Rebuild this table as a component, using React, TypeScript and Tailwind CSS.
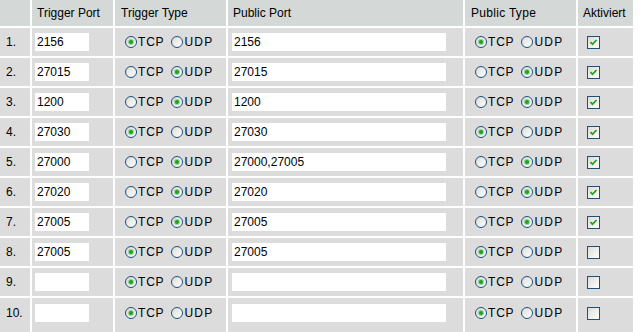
import React from 'react';

type Proto = 'TCP' | 'UDP';

interface Rule {
  triggerPort: string;
  triggerType: Proto;
  publicPort: string;
  publicType: Proto;
  enabled: boolean;
}

const rules: Rule[] = [
  { triggerPort: '2156', triggerType: 'TCP', publicPort: '2156', publicType: 'TCP', enabled: true },
  { triggerPort: '27015', triggerType: 'UDP', publicPort: '27015', publicType: 'UDP', enabled: true },
  { triggerPort: '1200', triggerType: 'UDP', publicPort: '1200', publicType: 'UDP', enabled: true },
  { triggerPort: '27030', triggerType: 'TCP', publicPort: '27030', publicType: 'TCP', enabled: true },
  { triggerPort: '27000', triggerType: 'UDP', publicPort: '27000,27005', publicType: 'UDP', enabled: true },
  { triggerPort: '27020', triggerType: 'UDP', publicPort: '27020', publicType: 'UDP', enabled: true },
  { triggerPort: '27005', triggerType: 'UDP', publicPort: '27005', publicType: 'UDP', enabled: true },
  { triggerPort: '27005', triggerType: 'TCP', publicPort: '27005', publicType: 'TCP', enabled: false },
  { triggerPort: '', triggerType: 'TCP', publicPort: '', publicType: 'TCP', enabled: false },
  { triggerPort: '', triggerType: 'TCP', publicPort: '', publicType: 'TCP', enabled: false },
];

const Radio: React.FC<{ checked: boolean }> = ({ checked }) => (
  <span className="relative inline-flex h-[12px] w-[12px] shrink-0 items-center justify-center rounded-full border border-[#1c5180] bg-gradient-to-br from-[#dcdcd6] to-white">
    {checked && <span className="h-[4px] w-[4px] rounded-full bg-[#21a121] shadow-[0_0_1px_1px_rgba(80,190,80,0.6)]" />}
  </span>
);

const ProtoPicker: React.FC<{ value: Proto }> = ({ value }) => (
  <div className="flex items-center pl-[10px]">
    <Radio checked={value === 'TCP'} />
    <span className="ml-[1px] mr-[7px] tracking-[0.8px]">TCP</span>
    <Radio checked={value === 'UDP'} />
    <span className="ml-[1px] tracking-[1.2px]">UDP</span>
  </div>
);

const Checkbox: React.FC<{ checked: boolean }> = ({ checked }) => (
  <span className="inline-flex h-[13px] w-[13px] items-center justify-center border border-[#1c5180] bg-gradient-to-br from-[#dcdcd7] to-white">
    {checked && (
      <svg width="9" height="9" viewBox="0 0 9 9">
        <path d="M1.5 4.2 L3.5 6.3 L7.5 2" fill="none" stroke="#21a121" strokeWidth="1.8" />
      </svg>
    )}
  </span>
);

const headCell = 'bg-[#d4d8d7] flex items-center px-[5px]';

export default function App() {
  return (
    <div className="h-[332px] w-[640px] overflow-hidden bg-white font-['Liberation_Sans',Arial,sans-serif] text-[12px] text-black">
      <div className="grid w-[633px] grid-cols-[30px_81px_111px_235px_111px_55px] grid-rows-[26px_repeat(9,28px)_34px] gap-[2px]">
        <div className={headCell} />
        <div className={headCell}>Trigger Port</div>
        <div className={`${headCell} pl-[6px]`}>Trigger Type</div>
        <div className={headCell}>Public Port</div>
        <div className={`${headCell} pl-[6px] tracking-[0.3px]`}>Public Type</div>
        <div className={headCell}>Aktiviert</div>

        {rules.map((r, i) => {
          const cell = `bg-[#dcdcdc] flex items-center ${i === rules.length - 1 ? 'pb-[4px]' : ''}`;
          return (
            <React.Fragment key={i}>
              <div className={`${cell} pl-[6px]`}>{i + 1}.</div>
              <div className={`${cell} pl-[3px]`}>
                <div className="h-[18px] w-[54px] bg-white pl-[2px] leading-[18px]">{r.triggerPort}</div>
              </div>
              <div className={cell}>
                <ProtoPicker value={r.triggerType} />
              </div>
              <div className={`${cell} pl-[4px]`}>
                <div className="h-[18px] w-[214px] bg-white pl-[2px] leading-[18px]">{r.publicPort}</div>
              </div>
              <div className={cell}>
                <ProtoPicker value={r.publicType} />
              </div>
              <div className={`${cell} pl-[9px]`}>
                <Checkbox checked={r.enabled} />
              </div>
            </React.Fragment>
          );
        })}
      </div>
    </div>
  );
}
